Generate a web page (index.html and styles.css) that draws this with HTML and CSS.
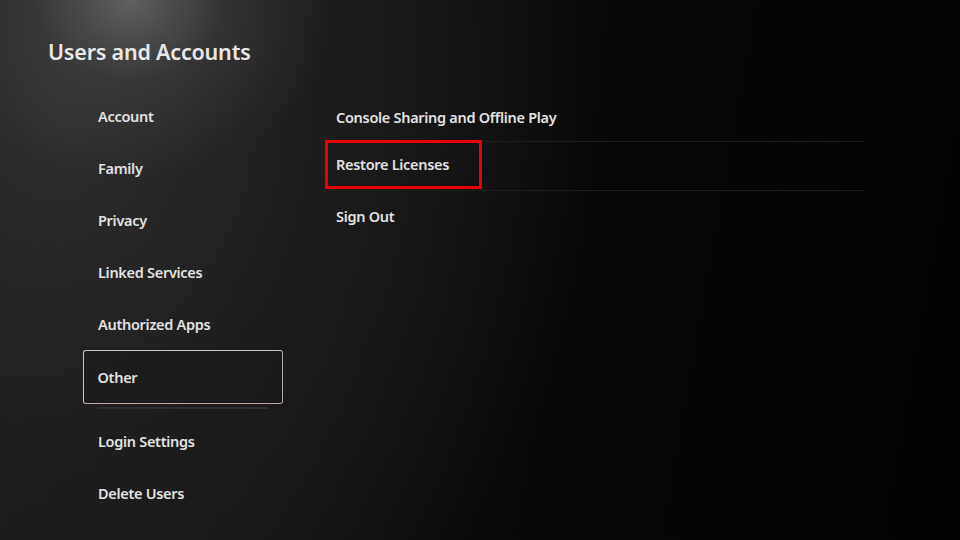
FILE: index.html
```html
<!DOCTYPE html>
<html lang="en">
<head>
<meta charset="utf-8">
<title>Users and Accounts</title>
<link rel="stylesheet" href="styles.css">
</head>
<body>
<div class="screen">
  <h1 class="title">Users and Accounts</h1>
  <div class="main">
    <nav class="side">
      <div class="side-item">Account</div>
      <div class="side-item">Family</div>
      <div class="side-item">Privacy</div>
      <div class="side-item">Linked Services</div>
      <div class="side-item">Authorized Apps</div>
      <div class="side-item selected">Other</div>
      <div class="side-divider"></div>
      <div class="side-item">Login Settings</div>
      <div class="side-item">Delete Users</div>
    </nav>
    <section class="list">
      <div class="row"><span class="row-label">Console Sharing and Offline Play</span></div>
      <div class="row"><span class="row-label highlight">Restore Licenses</span></div>
      <div class="row last"><span class="row-label">Sign Out</span></div>
    </section>
  </div>
</div>
</body>
</html>
```

FILE: styles.css
```css
html, body {
  margin: 0;
  padding: 0;
}
body {
  width: 960px;
  height: 540px;
  overflow: hidden;
  background: #050505;
  font-family: "Noto Sans", "Open Sans", sans-serif;
  color: #e6e6e6;
}
.screen {
  width: 960px;
  height: 540px;
  box-sizing: border-box;
  background:
    radial-gradient(ellipse 210px 180px at 130px 0px, rgba(115,115,115,0.75), rgba(80,80,80,0.35) 45%, rgba(60,60,60,0) 100%),
    radial-gradient(ellipse 540px 640px at 60px 120px, rgba(48,48,48,0.9), rgba(34,34,34,0.6) 50%, rgba(20,20,20,0) 100%),
    linear-gradient(100deg, #1c1c1c 0%, #121212 35%, #070707 60%, #030303 100%);
  padding: 38px 0 0 48px;
}
.title {
  margin: 0;
  font-size: 21.5px;
  font-weight: 600;
  line-height: 28px;
  letter-spacing: -0.2px;
  color: #e8e8e8;
}
.main {
  display: flex;
  margin-top: 24px;
  margin-left: 35px;
}
.side {
  width: 200px;
  display: flex;
  flex-direction: column;
}
.side-item {
  height: 52px;
  box-sizing: border-box;
  display: flex;
  align-items: center;
  padding-left: 15px;
  font-size: 14.5px;
  font-weight: 600;
  letter-spacing: -0.3px;
  color: #e2e2e2;
}
.side-item.selected {
  border: 1.5px solid #c8c4c0;
  border-right-color: #b8aaa4;
  border-bottom-color: #c0aaa0;
  border-radius: 3px;
  padding-left: 13.5px;
  background: rgba(20,20,20,0.25);
  height: 54px;
  margin-bottom: -2px;
}
.side-divider {
  height: 2px;
  margin: 5px 15px 6px 15px;
  background: #2e2e30;
}
.list {
  margin-left: 42px;
  margin-top: 3px;
  width: 540px;
  display: flex;
  flex-direction: column;
}
.row {
  height: 49px;
  box-sizing: border-box;
  display: flex;
  align-items: center;
  border-bottom: 1px solid #1e1e1e;
}
.row.last {
  border-bottom: none;
}
.row-label {
  padding-left: 11px;
  font-size: 14.5px;
  font-weight: 600;
  letter-spacing: -0.3px;
  color: #e2e2e2;
}
.row-label.highlight {
  border: 3px solid #e8000b;
  height: 49px;
  margin-top: -3px;
  margin-bottom: 1px;
  box-sizing: border-box;
  display: flex;
  align-items: center;
  padding: 0 30px 0 8px;
}
```
